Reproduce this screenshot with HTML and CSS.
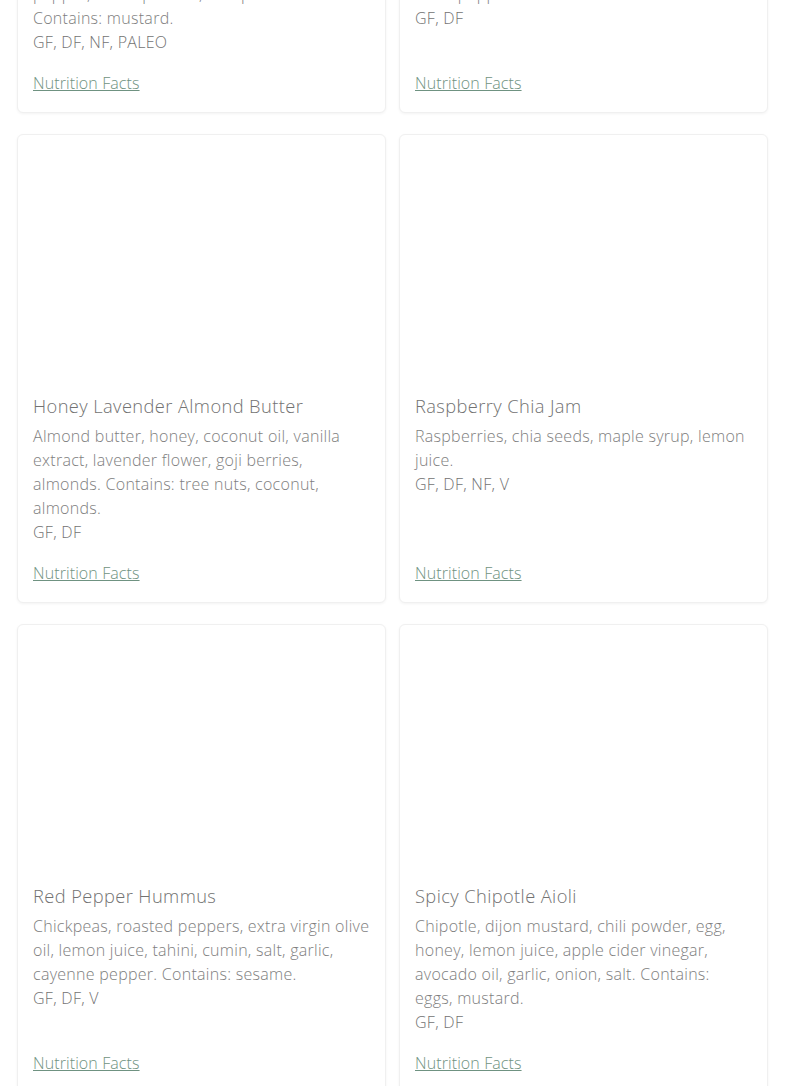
FILE: index.html
```html
<!DOCTYPE html>
<html lang="en">
<head>
<meta charset="utf-8">
<title>Menu</title>
<link rel="stylesheet" href="styles.css">
</head>
<body>
<main class="grid">
  <article class="card">
    <div class="card-img"></div>
    <div class="card-body">
      <h3 class="title">Smoky Mustard Dressing</h3>
      <p class="desc">Olive oil, apple cider vinegar, maple syrup, garlic, sea salt, smoked paprika, black pepper, onion powder, chili powder. Contains: mustard.</p>
      <p class="tags">GF, DF, NF, PALEO</p>
      <a class="link" href="#">Nutrition Facts</a>
    </div>
  </article>
  <article class="card">
    <div class="card-img"></div>
    <div class="card-body">
      <h3 class="title">Roasted Garlic Tapenade</h3>
      <p class="desc">Kalamata olives, green olives, capers, roasted garlic, olive oil, lemon juice, parsley, oregano, black pepper.</p>
      <p class="tags">GF, DF</p>
      <a class="link" href="#">Nutrition Facts</a>
    </div>
  </article>
  <article class="card">
    <div class="card-img"></div>
    <div class="card-body">
      <h3 class="title">Honey Lavender Almond Butter</h3>
      <p class="desc">Almond butter, honey, coconut oil, vanilla extract, lavender flower, goji berries, almonds. Contains: tree nuts, coconut, almonds.</p>
      <p class="tags">GF, DF</p>
      <a class="link" href="#">Nutrition Facts</a>
    </div>
  </article>
  <article class="card">
    <div class="card-img"></div>
    <div class="card-body">
      <h3 class="title">Raspberry Chia Jam</h3>
      <p class="desc">Raspberries, chia seeds, maple syrup, lemon juice.</p>
      <p class="tags">GF, DF, NF, V</p>
      <a class="link" href="#">Nutrition Facts</a>
    </div>
  </article>
  <article class="card">
    <div class="card-img"></div>
    <div class="card-body">
      <h3 class="title">Red Pepper Hummus</h3>
      <p class="desc">Chickpeas, roasted peppers, extra virgin olive oil, lemon juice, tahini, cumin, salt, garlic, cayenne pepper. Contains: sesame.</p>
      <p class="tags">GF, DF, V</p>
      <a class="link" href="#">Nutrition Facts</a>
    </div>
  </article>
  <article class="card">
    <div class="card-img"></div>
    <div class="card-body">
      <h3 class="title">Spicy Chipotle Aioli</h3>
      <p class="desc">Chipotle, dijon mustard, chili powder, egg, honey, lemon juice, apple cider vinegar, avocado oil, garlic, onion, salt. Contains: eggs,&nbsp;mustard.</p>
      <p class="tags">GF, DF</p>
      <a class="link" href="#">Nutrition Facts</a>
    </div>
  </article>
</main>
</body>
</html>
```
FILE: styles.css
```css
html, body {
  margin: 0;
  padding: 0;
  background: #ffffff;
  overflow: hidden;
}

body {
  font-family: "Open Sans", "Liberation Sans", sans-serif;
  color: #858585;
}

.grid {
  display: grid;
  grid-template-columns: 1fr 1fr;
  column-gap: 13px;
  row-gap: 21px;
  padding: 0 17px 0 17px;
  margin-top: -356px;
}

.card {
  display: flex;
  flex-direction: column;
  background: #ffffff;
  border: 1px solid #f0f0f0;
  border-radius: 6px;
  box-shadow: 0 1px 3px rgba(0, 0, 0, 0.05);
}

.card-img {
  height: 250px;
}

.card-body {
  flex: 1;
  display: flex;
  flex-direction: column;
  padding: 8px 15px 17px 15px;
}

.title {
  margin: 0 0 5px 0;
  font-size: 18.3px;
  line-height: 26px;
  font-weight: 300;
  letter-spacing: 0.4px;
  color: #727272;
}

.desc {
  margin: 0;
  font-size: 16px;
  line-height: 24px;
  font-weight: 300;
  letter-spacing: 0.28px;
  color: #7e7e7e;
}

.tags {
  margin: 0;
  font-size: 16px;
  line-height: 24px;
  font-weight: 300;
  letter-spacing: 0.28px;
  color: #727272;
}

.link {
  margin-top: auto;
  padding-top: 17px;
  font-size: 16px;
  line-height: 24px;
  font-weight: 300;
  letter-spacing: 0.1px;
  color: #6f9281;
  text-decoration: underline;
  align-self: flex-start;
}
```
